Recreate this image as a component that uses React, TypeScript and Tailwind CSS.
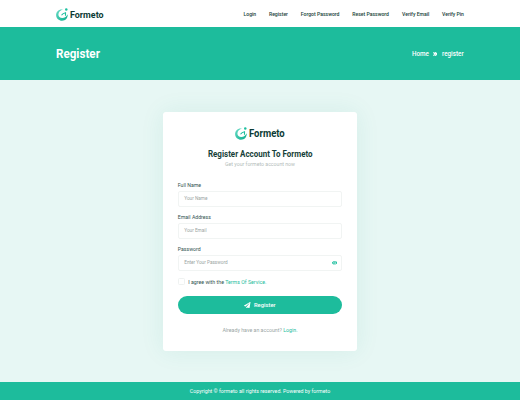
import { FaEye, FaPaperPlane } from "react-icons/fa";

const navLinks = [
  { label: "Login", size: "w-[13px]" },
  { label: "Register", size: "w-[19.5px]" },
  { label: "Forgot Password", size: "w-[39px]" },
  { label: "Reset Password", size: "w-[37.5px]" },
  { label: "Verify Email", size: "w-[27.5px]" },
  { label: "Verify Pin", size: "w-[22px]" },
];

function Logo({ large = false }: { large?: boolean }) {
  return (
    <div className="flex h-[13px] items-center gap-[2px]">
      <svg viewBox="0 0 24 26" className="h-[13px] w-[12px] shrink-0" fill="none">
        <defs>
          <linearGradient id="mark" x1="0" y1="0" x2="1" y2="1">
            <stop offset="0" stopColor="#6bdcc7" />
            <stop offset="1" stopColor="#0aae8c" />
          </linearGradient>
        </defs>
        <path
          d="M14 3C6 1.500 0 7 .2 14.500.5 21 6 25.500 12 25.500c7 0 12-5.500 11.500-13-2.500 4.500-6 7.500-11 7.500C8 20 4.800 17 4.800 12.800 4.800 8 9 4.500 14 3z"
          fill="url(#mark)"
        />
        <path d="M11 14.500c2-3 4.500-4.500 8-5v6" stroke="#1dbf9f" strokeWidth="2.200" />
        <circle cx="20.500" cy="3" r="2.500" fill="#1dbf9f" />
      </svg>
      <span
        className={`w-[36px] origin-left leading-[13px] font-bold whitespace-nowrap text-[#0c3b35] ${
          large ? "scale-x-[0.94] text-[10.100px]" : "scale-x-[0.92] text-[9.700px]"
        }`}
      >
        Formeto
      </span>
    </div>
  );
}

function Field({ label, placeholder, eye = false }: { label: string; placeholder: string; eye?: boolean }) {
  return (
    <div className="h-[32px]">
      <div className="h-[10px] text-[5.2px] leading-[8px] text-[#31534f]">{label}</div>
      <div className="flex h-[16px] items-center justify-between rounded-[2px] border border-[#f1f4f3] px-[5.500px]">
        <span className="text-[4.7px] leading-[8px] text-[#9aa4a2]">{placeholder}</span>
        {eye && <FaEye className="mr-[-1.500px] size-[5.500px] text-[#1dbf9f]" />}
      </div>
    </div>
  );
}

export default function App() {
  return (
    <div className="flex h-[400px] w-[520px] flex-col overflow-hidden bg-[#e7f7f4] font-['Roboto',sans-serif]">
      <header className="flex h-[27px] shrink-0 items-center justify-between bg-white px-[56px] pt-px">
        <Logo />
        <nav className="flex gap-[12.400px] text-[5.1px] leading-[8px] font-medium text-[#173f39]">
          {navLinks.map((link) => (
            <a key={link.label} className={`whitespace-nowrap ${link.size}`}>
              {link.label}
            </a>
          ))}
        </nav>
      </header>

      <section className="flex h-[53px] shrink-0 items-center justify-between bg-[#1dbc9c] px-[56px] text-white">
        <h1 className="origin-left scale-x-[0.93] text-[12.500px] leading-[16px] font-bold">Register</h1>
        <div className="flex items-center text-[6.3px] leading-[10px] font-medium">
          <span className="w-[17px]">Home</span>
          <svg viewBox="0 0 8 8" className="mr-[5px] ml-[4px] size-[4px]" fill="none" stroke="currentColor" strokeWidth="2.400">
            <path d="M1 .5 4 4 1 7.500M4.500.5l3 3.500-3 3.500" />
          </svg>
          <span className="w-[22px] whitespace-nowrap">register</span>
        </div>
      </section>

      <main className="flex h-[302px] shrink-0 justify-center pt-[32px]">
        <div className="h-[238.500px] w-[194.500px] rounded-[3px] bg-white px-[15px] shadow-[0_0_24px_rgba(29,140,120,0.09)]">
          <div className="flex justify-center pt-[15px]">
            <Logo large />
          </div>
          <h2 className="mt-[8px] scale-x-[0.93] text-center text-[8.600px] leading-[12px] font-bold whitespace-nowrap text-[#173f39]">
            Register Account To Formeto
          </h2>
          <p className="mt-[1px] text-center text-[5.2px] leading-[7px] text-[#b4bdbb]">Get your formeto account now</p>
          <form className="mt-[13px]">
            <Field label="Full Name" placeholder="Your Name" />
            <Field label="Email Address" placeholder="Your Email" />
            <Field label="Password" placeholder="Enter Your Password" eye />
            <div className="flex h-[9px] items-center gap-[3.500px] text-[5.250px] leading-[8px] text-[#31534f]">
              <span className="size-[7px] rounded-[1.500px] border border-[#eff2f1]" />
              <span className="whitespace-nowrap">
                I agree with the <a className="text-[#1dbc9c]">Terms Of Service.</a>
              </span>
            </div>
            <button
              type="button"
              className="mt-[10px] flex h-[17.500px] w-full items-center justify-center gap-[3px] rounded-full bg-[#1dbc9c] text-[5.8px] leading-[8px] font-medium text-white"
            >
              <FaPaperPlane className="size-[6.500px]" />
              <span>Register</span>
            </button>
          </form>
          <p className="mt-[12.500px] text-center text-[5.250px] leading-[8px] text-[#9aa6a4]">
            Already have an account? <a className="text-[#1dbc9c]">Login.</a>
          </p>
        </div>
      </main>

      <footer className="flex h-[18px] shrink-0 items-center justify-center bg-[#1dbc9c] text-[5.250px] leading-[8px] text-white">
        Copyright © formeto all rights reserved. Powered by formeto
      </footer>
    </div>
  );
}
